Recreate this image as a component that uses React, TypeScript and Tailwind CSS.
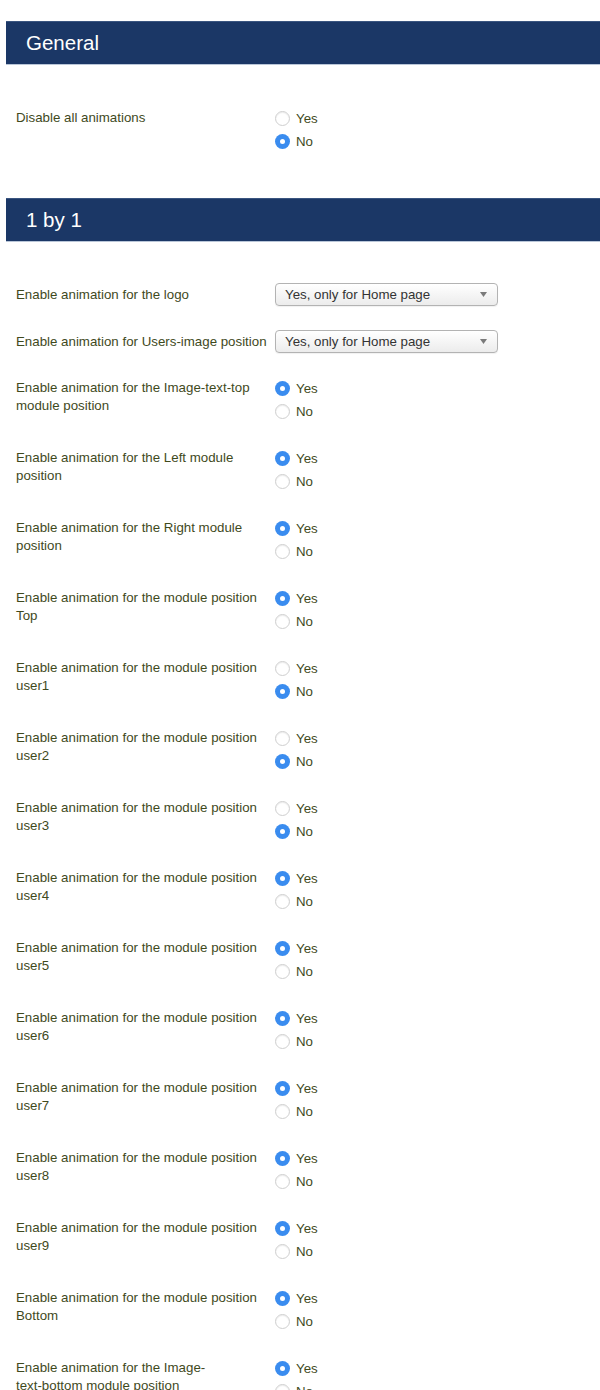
import React from "react";

const font = { fontFamily: '"Liberation Sans", Arial, sans-serif' };

type Row =
  | { id: string; label: React.ReactNode; kind: "select"; value: string }
  | { id: string; label: React.ReactNode; kind: "radio"; yes: boolean };

function Header({ title }: { title: string }) {
  return (
    <div className="ml-[6px] h-[44px] bg-[#1b3766] border-t border-[#3a5580] border-b border-b-[#b9c6d8] flex items-center pl-[20px]">
      <span className="text-white text-[20.5px] leading-none">{title}</span>
    </div>
  );
}

function Radio({ checked, label }: { checked: boolean; label: string }) {
  return (
    <label className="flex items-center h-[23px] gap-[6px]">
      {checked ? (
        <span className="w-[15px] h-[15px] rounded-full bg-[#3a8cef] flex items-center justify-center">
          <span className="w-[5px] h-[5px] rounded-full bg-white" />
        </span>
      ) : (
        <span className="w-[15px] h-[15px] rounded-full bg-white border border-[#cfcfcf] shadow-[inset_0_1px_1px_rgba(0,0,0,0.08)]" />
      )}
      <span className="text-[13.3px] text-[#3f4a1d]">{label}</span>
    </label>
  );
}

function Select({ value }: { value: string }) {
  return (
    <div className="w-[223px] h-[23px] rounded-[4px] border border-[#b3b3b3] bg-gradient-to-b from-white to-[#ececec] flex items-center justify-between pl-[9px] pr-[10px] shadow-[0_1px_1px_rgba(0,0,0,0.06)]">
      <span className="text-[13.3px] text-[#333]">{value}</span>
      <svg width="7" height="5" viewBox="0 0 7 5">
        <path d="M0 0 L7 0 L3.5 5 Z" fill="#7a7a7a" />
      </svg>
    </div>
  );
}

function FormRow({ row }: { row: Row }) {
  if (row.kind === "select") {
    return (
      <div className="flex items-center">
        <div className="w-[259px] pr-[4px] text-[13.3px] leading-[18px] text-[#3f4a1d]">{row.label}</div>
        <Select value={row.value} />
      </div>
    );
  }
  return (
    <div className="flex items-start">
      <div className="w-[259px] pr-[4px] pt-[2px] text-[13.3px] leading-[18px] text-[#3f4a1d]">{row.label}</div>
      <div className="flex flex-col">
        <Radio checked={row.yes} label="Yes" />
        <Radio checked={!row.yes} label="No" />
      </div>
    </div>
  );
}

const pos = "Enable animation for the module position";

const byOne: Row[] = [
  { id: "logo", label: "Enable animation for the logo", kind: "select", value: "Yes, only for Home page" },
  { id: "users", label: "Enable animation for Users-image position", kind: "select", value: "Yes, only for Home page" },
  { id: "itt", label: "Enable animation for the Image-text-top module position", kind: "radio", yes: true },
  { id: "left", label: "Enable animation for the Left module position", kind: "radio", yes: true },
  { id: "right", label: "Enable animation for the Right module position", kind: "radio", yes: true },
  { id: "top", label: `${pos} Top`, kind: "radio", yes: true },
  { id: "u1", label: `${pos} user1`, kind: "radio", yes: false },
  { id: "u2", label: `${pos} user2`, kind: "radio", yes: false },
  { id: "u3", label: `${pos} user3`, kind: "radio", yes: false },
  { id: "u4", label: `${pos} user4`, kind: "radio", yes: true },
  { id: "u5", label: `${pos} user5`, kind: "radio", yes: true },
  { id: "u6", label: `${pos} user6`, kind: "radio", yes: true },
  { id: "u7", label: `${pos} user7`, kind: "radio", yes: true },
  { id: "u8", label: `${pos} user8`, kind: "radio", yes: true },
  { id: "u9", label: `${pos} user9`, kind: "radio", yes: true },
  { id: "bottom", label: `${pos} Bottom`, kind: "radio", yes: true },
  {
    id: "itb",
    label: (
      <>
        Enable animation for the Image-<span className="whitespace-nowrap">text-bottom</span> module position
      </>
    ),
    kind: "radio",
    yes: true,
  },
];

export default function App() {
  return (
    <div className="w-[600px] h-[1390px] overflow-hidden bg-white pt-[21px]" style={font}>
      {/* General */}
      <Header title="General" />
      <div className="pl-[16px] pt-[42px] pb-[45px] flex flex-col gap-[24px]">
        <FormRow row={{ id: "disable", label: "Disable all animations", kind: "radio", yes: false }} />
      </div>

      {/* 1 by 1 */}
      <Header title="1 by 1" />
      <div className="pl-[16px] pt-[41px] flex flex-col gap-[24px]">
        {byOne.map((r) => (
          <FormRow key={r.id} row={r} />
        ))}
      </div>
    </div>
  );
}
